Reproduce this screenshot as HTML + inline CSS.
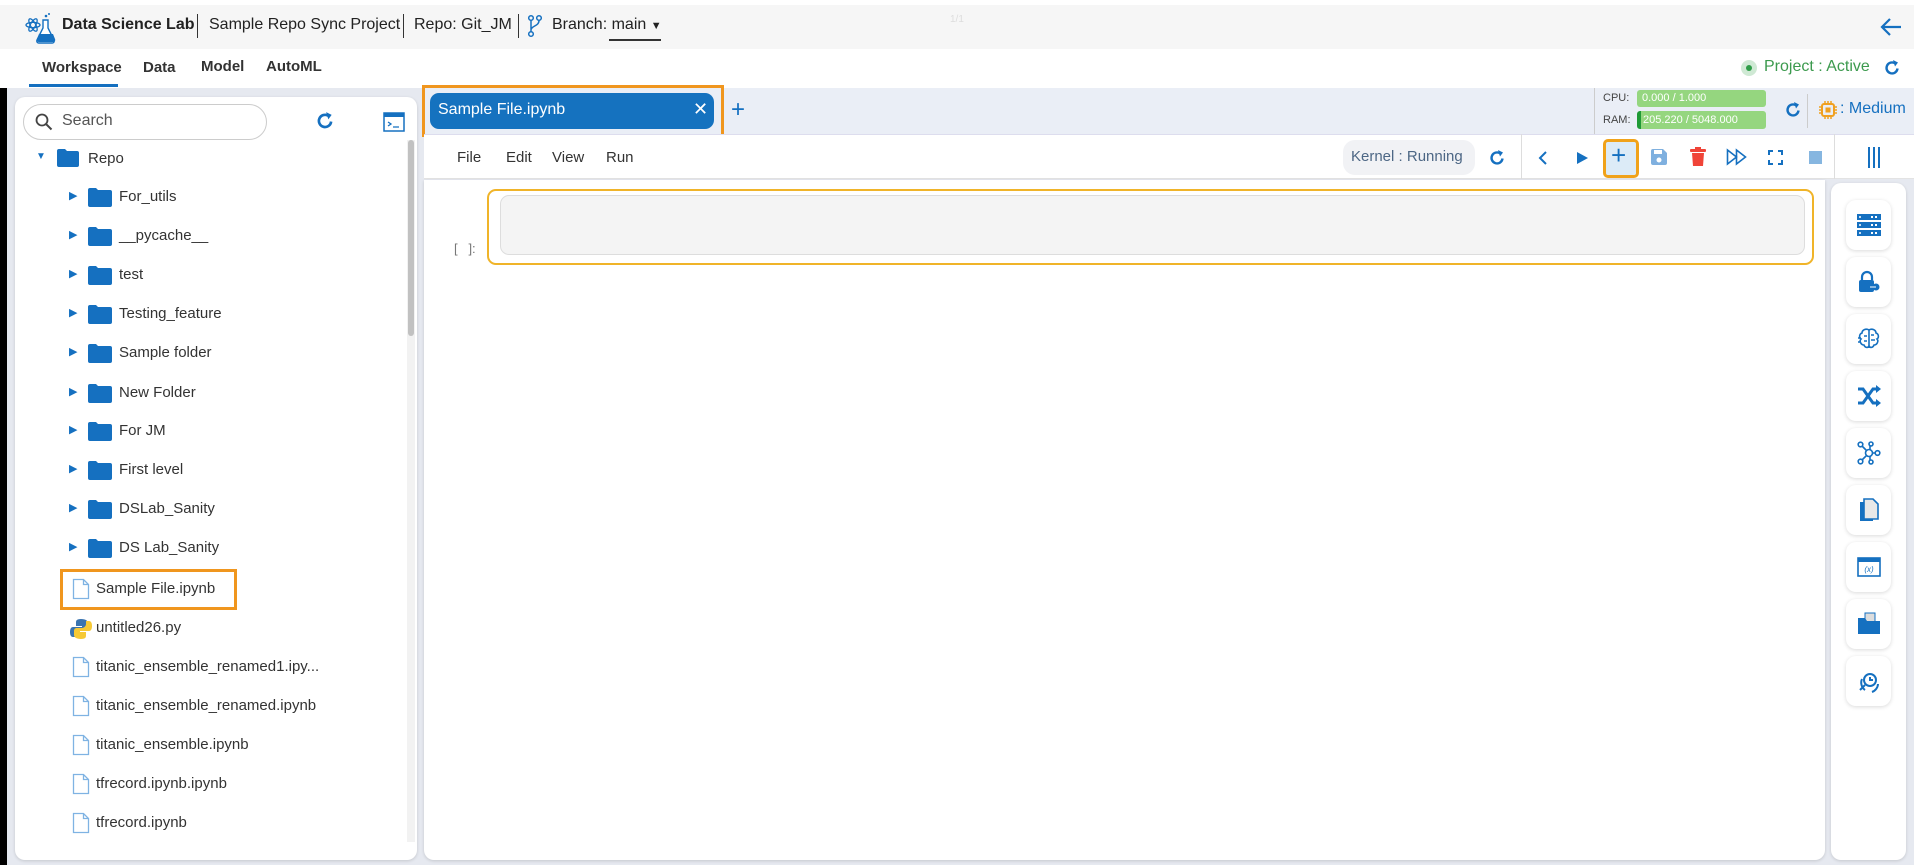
<!DOCTYPE html>
<html><head><meta charset="utf-8">
<style>
*{box-sizing:border-box;margin:0;padding:0}
body{width:1914px;height:865px;overflow:hidden;background:#e6e9f0;font-family:"Liberation Sans",sans-serif;position:relative;color:#222}
.a{position:absolute}
.t{position:absolute;white-space:nowrap}
.blue{color:#1570c0}
</style></head><body>
<!-- header -->
<div class="a" style="left:0;top:0;width:1914px;height:49px;background:#f6f6f6;border-top:5px solid #fff"></div>
<svg class="a" style="left:24px;top:12px" width="32" height="32" viewBox="0 0 32 32">
<g fill="none" stroke="#1570c0" stroke-width="1.3"><ellipse cx="9" cy="13" rx="7" ry="2.6"/><ellipse cx="9" cy="13" rx="7" ry="2.6" transform="rotate(60 9 13)"/><ellipse cx="9" cy="13" rx="7" ry="2.6" transform="rotate(-60 9 13)"/></g>
<path d="M19 8v8l-6 12a2 2 0 0 0 2 3h13a2 2 0 0 0 2-3l-6-12V8z" fill="#fff" stroke="#1570c0" stroke-width="1.4"/>
<path d="M15 22h14l2 5a2 2 0 0 1-2 3H15a2 2 0 0 1-2-3z" fill="#1570c0"/>
<circle cx="22" cy="4" r="1.3" fill="#1570c0"/><circle cx="25" cy="2" r="1" fill="#1570c0"/>
</svg>
<div class="t" style="left:62px;top:16px;font-size:16px;font-weight:bold">Data Science Lab</div>
<div class="a" style="left:197px;top:14px;width:1px;height:24px;background:#333"></div>
<div class="t" style="left:209px;top:16px;font-size:16px">Sample Repo Sync Project</div>
<div class="a" style="left:403px;top:14px;width:1px;height:24px;background:#333"></div>
<div class="t" style="left:414px;top:16px;font-size:16px">Repo: Git_JM</div>
<div class="a" style="left:518px;top:14px;width:1px;height:24px;background:#333"></div>
<svg class="a" style="left:527px;top:14px" width="16" height="24" viewBox="0 0 16 24"><g fill="none" stroke="#1570c0" stroke-width="1.5"><circle cx="4" cy="4" r="2.3"/><circle cx="12" cy="4" r="2.3"/><circle cx="4" cy="20" r="2.3"/><path d="M4 6.5v11M12 6.5c0 6-8 5-8 10"/></g></svg>
<div class="t" style="left:552px;top:16px;font-size:16px">Branch: main <span style="font-size:11px">&#9660;</span></div>
<div class="a" style="left:609px;top:39px;width:52px;height:2px;background:#333"></div>
<svg class="a" style="left:1880px;top:17px" width="22" height="20" viewBox="0 0 22 20"><path d="M21 10H3M10 2L2 10l8 8" fill="none" stroke="#1570c0" stroke-width="2.2"/></svg>
<div class="t" style="left:950px;top:14px;font-size:10px;color:#ddd">1/1</div>
<!-- nav -->
<div class="a" style="left:0;top:49px;width:1914px;height:39px;background:#fff"></div>
<div class="t" style="left:42px;top:59px;font-size:15px;color:#333;font-weight:bold">Workspace</div>
<div class="a" style="left:29px;top:84px;width:89px;height:3px;background:#1570c0"></div>
<div class="t" style="left:143px;top:59px;font-size:15px;color:#333;font-weight:bold">Data</div>
<div class="t" style="left:201px;top:58px;font-size:15px;color:#333;font-weight:bold">Model</div>
<div class="t" style="left:266px;top:58px;font-size:15px;color:#333;font-weight:bold">AutoML</div>
<div class="a" style="left:1741px;top:60px;width:16px;height:16px;border-radius:50%;background:#cfe9d4"></div>
<div class="a" style="left:1746px;top:65px;width:6px;height:6px;border-radius:50%;background:#2e9d47"></div>
<div class="t" style="left:1764px;top:58px;font-size:16px;color:#3c9a4e">Project : Active</div>
<svg class="a" style="left:1883px;top:59px" width="18" height="18" viewBox="0 0 18 18"><path d="M14.5 9.5A5.5 5.5 0 1 1 12 4.3" fill="none" stroke="#1570c0" stroke-width="2.4"/><path d="M10 1l5 2.5-3 4z" fill="#1570c0"/></svg>
<!-- black strip -->
<div class="a" style="left:0;top:88px;width:7px;height:777px;background:#000"></div>
<!-- left panel -->
<div class="a" style="left:15px;top:97px;width:402px;height:763px;background:#fff;border-radius:10px;box-shadow:0 1px 3px rgba(0,0,0,.15)"></div>
<div class="a" style="left:23px;top:104px;width:244px;height:36px;border:1px solid #ccc;border-radius:18px"></div>
<svg class="a" style="left:35px;top:113px" width="18" height="18" viewBox="0 0 18 18"><circle cx="7" cy="7" r="5.5" fill="none" stroke="#444" stroke-width="1.8"/><path d="M11 11l5.5 5.5" stroke="#444" stroke-width="2"/></svg>
<div class="t" style="left:62px;top:112px;font-size:16px;color:#555">Search</div>
<svg class="a" style="left:315px;top:111px" width="20" height="20" viewBox="0 0 18 18"><path d="M14.5 9.5A5.5 5.5 0 1 1 12 4.3" fill="none" stroke="#1570c0" stroke-width="2.4"/><path d="M10 1l5 2.5-3 4z" fill="#1570c0"/></svg>
<svg class="a" style="left:383px;top:112px" width="22" height="20" viewBox="0 0 22 20"><rect x="1" y="1" width="20" height="18" fill="#fff" stroke="#1570c0" stroke-width="1.5"/><rect x="1" y="1" width="20" height="4" fill="#1570c0"/><path d="M5 10l3 2-3 2M10 15h6" fill="none" stroke="#1570c0" stroke-width="1.3"/></svg>
<div class="a" style="left:407px;top:140px;width:8px;height:702px;background:#f2f2f2"></div>
<div class="a" style="left:408px;top:140px;width:6px;height:196px;background:#c1c1c1;border-radius:3px"></div>
<!-- Repo -->
<div class="t" style="left:36px;top:151px;font-size:10px;color:#1570c0">&#9660;</div>
<svg class="a" style="left:57px;top:149px" width="22" height="18" viewBox="0 0 22 18"><path d="M0 2a2 2 0 0 1 2-2h6l2 2h10a2 2 0 0 1 2 2v12a2 2 0 0 1-2 2H2a2 2 0 0 1-2-2z" fill="#1570c0"/></svg>
<div class="t" style="left:88px;top:150px;font-size:15px;color:#333">Repo</div>

<div id="tree"></div>
<!-- folders -->
<div class="a" style="left:0;top:0">
<div class="t" style="left:69px;top:189px;font-size:11px;color:#1570c0">&#9654;</div><svg class="a" style="left:88px;top:188px" width="24" height="19"><path d="M0 2a2 2 0 0 1 2-2h6l2 2h12a2 2 0 0 1 2 2v13a2 2 0 0 1-2 2H2a2 2 0 0 1-2-2z" fill="#1570c0"/></svg><div class="t" style="left:119px;top:188px;font-size:15px;color:#333">For_utils</div>
<div class="t" style="left:69px;top:228px;font-size:11px;color:#1570c0">&#9654;</div><svg class="a" style="left:88px;top:227px" width="24" height="19"><path d="M0 2a2 2 0 0 1 2-2h6l2 2h12a2 2 0 0 1 2 2v13a2 2 0 0 1-2 2H2a2 2 0 0 1-2-2z" fill="#1570c0"/></svg><div class="t" style="left:119px;top:227px;font-size:15px;color:#333">__pycache__</div>
<div class="t" style="left:69px;top:267px;font-size:11px;color:#1570c0">&#9654;</div><svg class="a" style="left:88px;top:266px" width="24" height="19"><path d="M0 2a2 2 0 0 1 2-2h6l2 2h12a2 2 0 0 1 2 2v13a2 2 0 0 1-2 2H2a2 2 0 0 1-2-2z" fill="#1570c0"/></svg><div class="t" style="left:119px;top:266px;font-size:15px;color:#333">test</div>
<div class="t" style="left:69px;top:306px;font-size:11px;color:#1570c0">&#9654;</div><svg class="a" style="left:88px;top:305px" width="24" height="19"><path d="M0 2a2 2 0 0 1 2-2h6l2 2h12a2 2 0 0 1 2 2v13a2 2 0 0 1-2 2H2a2 2 0 0 1-2-2z" fill="#1570c0"/></svg><div class="t" style="left:119px;top:305px;font-size:15px;color:#333">Testing_feature</div>
<div class="t" style="left:69px;top:345px;font-size:11px;color:#1570c0">&#9654;</div><svg class="a" style="left:88px;top:344px" width="24" height="19"><path d="M0 2a2 2 0 0 1 2-2h6l2 2h12a2 2 0 0 1 2 2v13a2 2 0 0 1-2 2H2a2 2 0 0 1-2-2z" fill="#1570c0"/></svg><div class="t" style="left:119px;top:344px;font-size:15px;color:#333">Sample folder</div>
<div class="t" style="left:69px;top:385px;font-size:11px;color:#1570c0">&#9654;</div><svg class="a" style="left:88px;top:384px" width="24" height="19"><path d="M0 2a2 2 0 0 1 2-2h6l2 2h12a2 2 0 0 1 2 2v13a2 2 0 0 1-2 2H2a2 2 0 0 1-2-2z" fill="#1570c0"/></svg><div class="t" style="left:119px;top:384px;font-size:15px;color:#333">New Folder</div>
<div class="t" style="left:69px;top:423px;font-size:11px;color:#1570c0">&#9654;</div><svg class="a" style="left:88px;top:422px" width="24" height="19"><path d="M0 2a2 2 0 0 1 2-2h6l2 2h12a2 2 0 0 1 2 2v13a2 2 0 0 1-2 2H2a2 2 0 0 1-2-2z" fill="#1570c0"/></svg><div class="t" style="left:119px;top:422px;font-size:15px;color:#333">For JM</div>
<div class="t" style="left:69px;top:462px;font-size:11px;color:#1570c0">&#9654;</div><svg class="a" style="left:88px;top:461px" width="24" height="19"><path d="M0 2a2 2 0 0 1 2-2h6l2 2h12a2 2 0 0 1 2 2v13a2 2 0 0 1-2 2H2a2 2 0 0 1-2-2z" fill="#1570c0"/></svg><div class="t" style="left:119px;top:461px;font-size:15px;color:#333">First level</div>
<div class="t" style="left:69px;top:501px;font-size:11px;color:#1570c0">&#9654;</div><svg class="a" style="left:88px;top:500px" width="24" height="19"><path d="M0 2a2 2 0 0 1 2-2h6l2 2h12a2 2 0 0 1 2 2v13a2 2 0 0 1-2 2H2a2 2 0 0 1-2-2z" fill="#1570c0"/></svg><div class="t" style="left:119px;top:500px;font-size:15px;color:#333">DSLab_Sanity</div>
<div class="t" style="left:69px;top:540px;font-size:11px;color:#1570c0">&#9654;</div><svg class="a" style="left:88px;top:539px" width="24" height="19"><path d="M0 2a2 2 0 0 1 2-2h6l2 2h12a2 2 0 0 1 2 2v13a2 2 0 0 1-2 2H2a2 2 0 0 1-2-2z" fill="#1570c0"/></svg><div class="t" style="left:119px;top:539px;font-size:15px;color:#333">DS Lab_Sanity</div>
</div>
<!-- files -->
<div class="a" style="left:60px;top:569px;width:177px;height:41px;border:3px solid #f0961e"></div>
<svg class="a" style="left:72px;top:578px" width="18" height="22" viewBox="0 0 18 22"><path d="M1.5 1.5h10l5 5v14h-15z M11.5 1.5v5h5" fill="none" stroke="#7fb3e3" stroke-width="1.3"/></svg>
<div class="t" style="left:96px;top:580px;font-size:15px;color:#333">Sample File.ipynb</div>
<svg class="a" style="left:70px;top:618px" width="22" height="22" viewBox="0 0 22 22"><path d="M11 1c-5 0-5 2-5 4v3h6v1H3C1 9 0 11 0 14s1 5 3 5h3v-3c0-2 2-4 4-4h5c2 0 3-1 3-3V5c0-2-2-4-7-4z" fill="#3a74b0"/><path d="M11 21c5 0 5-2 5-4v-3h-6v-1h9c2 0 3-2 3-5s-1-5-3-5h-3v3c0 2-2 4-4 4H7c-2 0-3 1-3 3v4c0 2 2 4 7 4z" fill="#f6c935"/></svg>
<div class="t" style="left:96px;top:619px;font-size:15px;color:#333">untitled26.py</div>
<svg class="a" style="left:72px;top:656px" width="18" height="22" viewBox="0 0 18 22"><path d="M1.5 1.5h10l5 5v14h-15z M11.5 1.5v5h5" fill="none" stroke="#7fb3e3" stroke-width="1.3"/></svg>
<div class="t" style="left:96px;top:658px;font-size:15px;color:#333">titanic_ensemble_renamed1.ipy...</div>
<svg class="a" style="left:72px;top:695px" width="18" height="22" viewBox="0 0 18 22"><path d="M1.5 1.5h10l5 5v14h-15z M11.5 1.5v5h5" fill="none" stroke="#7fb3e3" stroke-width="1.3"/></svg>
<div class="t" style="left:96px;top:697px;font-size:15px;color:#333">titanic_ensemble_renamed.ipynb</div>
<svg class="a" style="left:72px;top:734px" width="18" height="22" viewBox="0 0 18 22"><path d="M1.5 1.5h10l5 5v14h-15z M11.5 1.5v5h5" fill="none" stroke="#7fb3e3" stroke-width="1.3"/></svg>
<div class="t" style="left:96px;top:736px;font-size:15px;color:#333">titanic_ensemble.ipynb</div>
<svg class="a" style="left:72px;top:773px" width="18" height="22" viewBox="0 0 18 22"><path d="M1.5 1.5h10l5 5v14h-15z M11.5 1.5v5h5" fill="none" stroke="#7fb3e3" stroke-width="1.3"/></svg>
<div class="t" style="left:96px;top:775px;font-size:15px;color:#333">tfrecord.ipynb.ipynb</div>
<svg class="a" style="left:72px;top:812px" width="18" height="22" viewBox="0 0 18 22"><path d="M1.5 1.5h10l5 5v14h-15z M11.5 1.5v5h5" fill="none" stroke="#7fb3e3" stroke-width="1.3"/></svg>
<div class="t" style="left:96px;top:814px;font-size:15px;color:#333">tfrecord.ipynb</div>

<!-- tab bar -->
<div class="a" style="left:424px;top:88px;width:1490px;height:46px;background:#eaeef6"></div>
<div class="a" style="left:422px;top:85px;width:302px;height:52px;border:3px solid #f0961e"></div>
<div class="a" style="left:430px;top:93px;width:284px;height:36px;background:#1572bf;border-radius:9px"></div>
<div class="t" style="left:438px;top:101px;font-size:16px;color:#fff">Sample File.ipynb</div>
<div class="t" style="left:693px;top:99px;font-size:18px;color:#fff">&#10005;</div>
<div class="t" style="left:731px;top:96px;font-size:24px;color:#1570c0">+</div>
<div class="a" style="left:1594px;top:88px;width:1px;height:46px;background:#ccc"></div>
<div class="t" style="left:1603px;top:92px;font-size:11px;color:#444">CPU:</div>
<div class="a" style="left:1637px;top:90px;width:129px;height:17px;background:#95d67f;border-radius:3px"></div>
<div class="t" style="left:1642px;top:92px;font-size:11px;color:#fff">0.000 / 1.000</div>
<div class="t" style="left:1603px;top:114px;font-size:11px;color:#444">RAM:</div>
<div class="a" style="left:1637px;top:111px;width:129px;height:18px;background:#95d67f;border-radius:3px;border-left:4px solid #1f9a36"></div>
<div class="t" style="left:1643px;top:114px;font-size:11px;color:#fff">205.220 / 5048.000</div>
<svg class="a" style="left:1784px;top:101px" width="18" height="18" viewBox="0 0 18 18"><path d="M14.5 9.5A5.5 5.5 0 1 1 12 4.3" fill="none" stroke="#1570c0" stroke-width="2.4"/><path d="M10 1l5 2.5-3 4z" fill="#1570c0"/></svg>
<div class="a" style="left:1807px;top:94px;width:1px;height:34px;background:#ccc"></div>
<svg class="a" style="left:1818px;top:100px" width="20" height="20" viewBox="0 0 20 20"><rect x="4" y="4" width="12" height="12" rx="2" fill="none" stroke="#f0a020" stroke-width="2"/><rect x="7.5" y="7.5" width="5" height="5" fill="#f0a020"/><path d="M7 1v3M10 1v3M13 1v3M7 16v3M10 16v3M13 16v3M1 7h3M1 10h3M1 13h3M16 7h3M16 10h3M16 13h3" stroke="#f0a020" stroke-width="1.5"/></svg>
<div class="t" style="left:1840px;top:100px;font-size:16px;color:#1570c0">: Medium</div>

<!-- toolbar -->
<div class="a" style="left:424px;top:134px;width:1490px;height:45px;background:#fff;border-bottom:1px solid #e3e3e3;border-top:1px solid #dde"></div>
<div class="t" style="left:457px;top:149px;font-size:15px;color:#333">File</div>
<div class="t" style="left:506px;top:149px;font-size:15px;color:#333">Edit</div>
<div class="t" style="left:552px;top:149px;font-size:15px;color:#333">View</div>
<div class="t" style="left:606px;top:149px;font-size:15px;color:#333">Run</div>
<div class="a" style="left:1343px;top:140px;width:132px;height:35px;background:#f1f2f5;border-radius:12px"></div>
<div class="t" style="left:1351px;top:148px;font-size:15px;color:#4d6785">Kernel : Running</div>
<svg class="a" style="left:1488px;top:149px" width="18" height="18" viewBox="0 0 18 18"><path d="M14.5 9.5A5.5 5.5 0 1 1 12 4.3" fill="none" stroke="#1570c0" stroke-width="2.4"/><path d="M10 1l5 2.5-3 4z" fill="#1570c0"/></svg>
<div class="a" style="left:1521px;top:134px;width:1px;height:45px;background:#ddd"></div>
<svg class="a" style="left:1537px;top:150px" width="12" height="16"><path d="M9 2L3 8l6 6" fill="none" stroke="#1570c0" stroke-width="2"/></svg>
<svg class="a" style="left:1575px;top:150px" width="14" height="16"><path d="M2 2l11 6-11 6z" fill="#1570c0"/></svg>
<div class="a" style="left:1603px;top:139px;width:36px;height:39px;border:3px solid #f0a21a;border-radius:5px;background:#dcebf7"></div>
<div class="t" style="left:1611px;top:140px;font-size:26px;color:#1570c0;font-weight:300">+</div>
<svg class="a" style="left:1650px;top:148px" width="18" height="18" viewBox="0 0 18 18"><path d="M1 3a2 2 0 0 1 2-2h10l4 4v10a2 2 0 0 1-2 2H3a2 2 0 0 1-2-2z" fill="#7fb0df"/><rect x="4" y="2" width="8" height="4" fill="#fff"/><circle cx="9" cy="12" r="2.5" fill="#fff"/></svg>
<svg class="a" style="left:1690px;top:147px" width="16" height="20" viewBox="0 0 16 20"><rect x="0" y="2" width="16" height="3" rx="1" fill="#f04438"/><rect x="5" y="0" width="6" height="3" fill="#f04438"/><path d="M2 6h12l-1 13H3z" fill="#f04438"/></svg>
<svg class="a" style="left:1726px;top:148px" width="22" height="18" viewBox="0 0 22 18"><path d="M1.5 2l9 7-9 7zM10.5 2l9 7-9 7z" fill="none" stroke="#1570c0" stroke-width="1.6"/></svg>
<svg class="a" style="left:1768px;top:150px" width="15" height="15"><path d="M1 5V1h4M10 1h4v4M14 10v4h-4M5 14H1v-4" fill="none" stroke="#1570c0" stroke-width="2"/></svg>
<div class="a" style="left:1809px;top:151px;width:13px;height:13px;background:#86b6e0"></div>
<div class="a" style="left:1834px;top:134px;width:1px;height:45px;background:#ddd"></div>
<div class="a" style="left:1868px;top:147px;width:2px;height:21px;background:#1570c0"></div>
<div class="a" style="left:1873px;top:147px;width:2px;height:21px;background:#1570c0"></div>
<div class="a" style="left:1878px;top:147px;width:2px;height:21px;background:#1570c0"></div>

<!-- notebook body -->
<div class="a" style="left:424px;top:180px;width:1401px;height:680px;background:#fff;border-radius:0 0 10px 10px;box-shadow:0 1px 3px rgba(0,0,0,.15)"></div>
<div class="a" style="left:487px;top:189px;width:1327px;height:76px;border:2px solid #f0b429;border-radius:9px"></div>
<div class="a" style="left:500px;top:195px;width:1305px;height:60px;border:1px solid #ddd;border-radius:9px;background:#f4f4f4"></div>
<div class="t" style="left:454px;top:241px;font-size:13px;color:#777">[&nbsp;&nbsp;&nbsp;]:</div>

<!-- right sidebar -->
<div class="a" style="left:1831px;top:183px;width:75px;height:677px;background:#fff;border-radius:10px;box-shadow:0 1px 3px rgba(0,0,0,.15)"></div>
<div class="a" style="left:1846px;top:200px"><div style="position:absolute;left:0;top:0;width:45px;height:50px;border-radius:10px;box-shadow:0 1px 4px rgba(0,0,0,.15)"></div></div>
<div class="a" style="left:1846px;top:257px;width:45px;height:50px;border-radius:10px;box-shadow:0 1px 4px rgba(0,0,0,.15)"></div>
<div class="a" style="left:1846px;top:314px;width:45px;height:50px;border-radius:10px;box-shadow:0 1px 4px rgba(0,0,0,.15)"></div>
<div class="a" style="left:1846px;top:371px;width:45px;height:50px;border-radius:10px;box-shadow:0 1px 4px rgba(0,0,0,.15)"></div>
<div class="a" style="left:1846px;top:428px;width:45px;height:50px;border-radius:10px;box-shadow:0 1px 4px rgba(0,0,0,.15)"></div>
<div class="a" style="left:1846px;top:485px;width:45px;height:50px;border-radius:10px;box-shadow:0 1px 4px rgba(0,0,0,.15)"></div>
<div class="a" style="left:1846px;top:542px;width:45px;height:50px;border-radius:10px;box-shadow:0 1px 4px rgba(0,0,0,.15)"></div>
<div class="a" style="left:1846px;top:599px;width:45px;height:50px;border-radius:10px;box-shadow:0 1px 4px rgba(0,0,0,.15)"></div>
<div class="a" style="left:1846px;top:656px;width:45px;height:50px;border-radius:10px;box-shadow:0 1px 4px rgba(0,0,0,.15)"></div>
<!-- sidebar icons -->
<svg class="a" style="left:1857px;top:214px" width="24" height="22" viewBox="0 0 24 22"><rect y="0" width="24" height="6" fill="#1570c0"/><rect y="8" width="24" height="6" fill="#1570c0"/><rect y="16" width="24" height="6" fill="#1570c0"/><g fill="#fff"><circle cx="3" cy="3" r="1"/><circle cx="3" cy="11" r="1"/><circle cx="3" cy="19" r="1"/><rect x="14" y="2" width="2" height="2"/><rect x="18" y="2" width="2" height="2"/><rect x="14" y="10" width="2" height="2"/><rect x="18" y="10" width="2" height="2"/><rect x="14" y="18" width="2" height="2"/><rect x="18" y="18" width="2" height="2"/></g></svg>
<svg class="a" style="left:1857px;top:270px" width="24" height="24" viewBox="0 0 24 24"><path d="M5 10V7a5 5 0 0 1 10 0v3" fill="none" stroke="#1570c0" stroke-width="2.2"/><rect x="2" y="10" width="15" height="12" rx="2" fill="#1570c0"/><circle cx="19" cy="17" r="3.5" fill="#1570c0"/><path d="M13 17h6" stroke="#fff" stroke-width="1"/></svg>
<svg class="a" style="left:1857px;top:327px" width="24" height="24" viewBox="0 0 24 24" fill="none" stroke="#1570c0" stroke-width="1.6"><path d="M12 3c-3-2-7 0-7 3-3 1-3 5-1 6-2 2 0 6 3 6 1 3 4 3 5 1 1 2 4 2 5-1 3 0 5-4 3-6 2-1 2-5-1-6 0-3-4-5-7-3z"/><path d="M12 3v18M7 9h3M7 14h3M14 8h3M14 13h4M1 11h3M1 15h3"/></svg>
<svg class="a" style="left:1857px;top:385px" width="24" height="22" viewBox="0 0 24 22"><path d="M1 4h5l10 14h5M1 18h5l10-14h5" fill="none" stroke="#1570c0" stroke-width="3"/><path d="M19 0l5 4-5 4zM19 14l5 4-5 4z" fill="#1570c0"/></svg>
<svg class="a" style="left:1857px;top:441px" width="24" height="24" viewBox="0 0 24 24" fill="none" stroke="#1570c0" stroke-width="1.6"><circle cx="12" cy="12" r="3.5"/><circle cx="3.5" cy="3.5" r="2.3"/><circle cx="3.5" cy="20.5" r="2.3"/><circle cx="20.5" cy="12" r="2.3"/><circle cx="14" cy="21" r="2"/><circle cx="14" cy="3" r="2"/><path d="M5 5l4.5 4.5M5 19l4.5-4.5M15.5 12h3M13 15.5v3.5M13 8.5V5"/></svg>
<svg class="a" style="left:1859px;top:498px" width="20" height="24" viewBox="0 0 20 24"><path d="M1 4h13v19H1z" fill="#1570c0"/><path d="M5 1h9l5 5v15H5z" fill="#e8e8e8" stroke="#1570c0" stroke-width="1.6"/></svg>
<svg class="a" style="left:1857px;top:557px" width="24" height="20" viewBox="0 0 24 20"><rect x="1" y="1" width="22" height="18" fill="#fff" stroke="#1570c0" stroke-width="1.6"/><rect x="1" y="1" width="22" height="4" fill="#1570c0"/><text x="12" y="15" font-size="8" font-style="italic" fill="#1570c0" text-anchor="middle" font-family="Liberation Sans">(x)</text></svg>
<svg class="a" style="left:1857px;top:612px" width="24" height="24" viewBox="0 0 24 24"><path d="M8 1h10v10H8z" fill="#ddd" stroke="#1570c0" stroke-width="1"/><path d="M1 6h7l2 3h13v13H1z" fill="#1570c0"/></svg>
<svg class="a" style="left:1857px;top:670px" width="24" height="24" viewBox="0 0 24 24" fill="none" stroke="#1570c0" stroke-width="2"><circle cx="13" cy="10" r="6"/><path d="M13 7v3h3M8 15l-5 5M5 9a9 9 0 0 0 3 11M21 14a9 9 0 0 1-6 8"/></svg>
</body></html>
